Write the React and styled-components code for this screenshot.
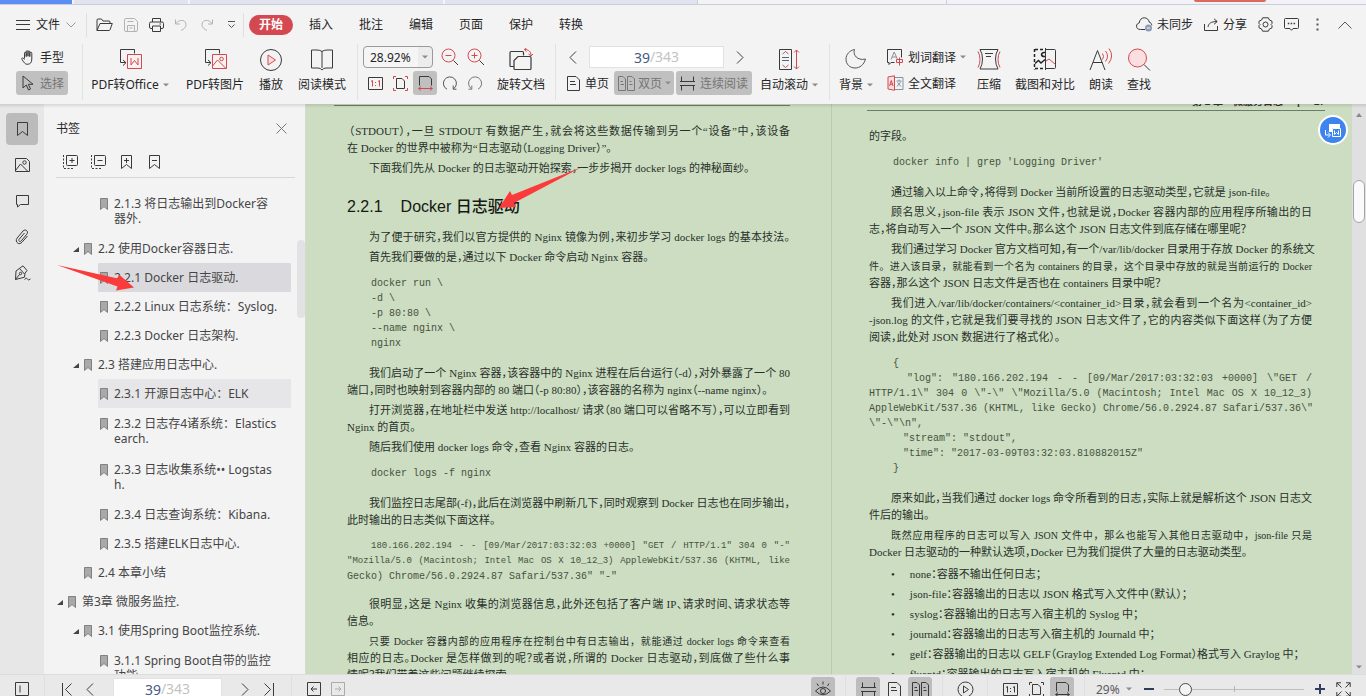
import React from "react";
import styled, { createGlobalStyle } from "styled-components";

const UI = '"Noto Sans", "Noto Sans CJK SC", sans-serif';
const INK = "#3a3a3a";
const RED = "#d4494f";
const BLUE = "#465a82";

const Global = createGlobalStyle`
  * { box-sizing: border-box; }
  body { margin: 0; overflow: hidden; font-family: ${UI}; font-size: 12px; color: #262626; }
  button, input, select { font-family: inherit; font-size: inherit; color: inherit; margin: 0; padding: 0; border: 0; background: none; }
  h1, h2, p, ul { margin: 0; padding: 0; font-size: inherit; font-weight: inherit; }
  svg { display: block; flex: none; }
`;

const Shell = styled.div`
  display: flex;
  flex-direction: column;
  height: 100vh;
  overflow: hidden;
  background: #f3f3f4;
`;

/* ---------- window tabs ---------- */
const TabStrip = styled.div`
  display: flex;
  flex: none;
  height: 5px;
  background: #f2f2f6;
  border-bottom: 1px solid #c9cde0;
`;
const WinTab = styled.span`
  flex: none;
  width: ${(p) => p.$w}px;
  background: ${(p) => p.$bg};
  border-right: ${(p) => p.$edge || 0}px solid ${(p) => p.$line || "#f4f5fa"};
`;
const LoginPill = styled.span`
  flex: none;
  width: 72px;
  height: 2px;
  margin: 0 100px 0 auto;
  background: #dc6a5c;
  border-radius: 0 0 8px 8px;
`;

/* ---------- menu bar ---------- */
const MenuBar = styled.header`
  display: flex;
  flex: none;
  align-items: center;
  height: 38px;
  padding: 1px 14px 0 16px;
`;
const MenuGroup = styled.div`
  display: flex;
  align-items: center;
  gap: ${(p) => p.$gap || 0}px;
  margin-left: ${(p) => (p.$push ? "auto" : `${p.$ml || 0}px`)};
`;
const PlainButton = styled.button`
  display: flex;
  flex: none;
  align-items: center;
  justify-content: center;
  gap: ${(p) => p.$gap || 5}px;
  min-width: ${(p) => p.$w || 0}px;
  height: 20px;
  line-height: 20px;
  white-space: nowrap;
`;
const Divider = styled.span`
  flex: none;
  width: 1px;
  height: ${(p) => p.$h || 24}px;
  margin: 0 ${(p) => p.$mr || 0}px 0 ${(p) => p.$ml || 0}px;
  background: #dfdfe0;
`;
const MenuTab = styled.button`
  flex: none;
  height: 20px;
  padding: 0 ${(p) => (p.$active ? 10 : 0)}px;
  line-height: 20px;
  border-radius: 10px;
  ${(p) => p.$active && `background: ${RED}; color: #fff; font-weight: 700;`}
`;

/* ---------- ribbon ---------- */
const Ribbon = styled.div`
  display: flex;
  flex: none;
  height: 61px;
  padding-left: 16px;
  overflow: hidden;
`;
const RibbonRule = styled.span`
  flex: none;
  width: 1px;
  margin: 1px ${(p) => p.$mr}px 4px ${(p) => p.$ml}px;
  background: #e2e2e3;
`;
const BigButton = styled.button`
  display: flex;
  flex: none;
  flex-direction: column;
  align-items: center;
  width: ${(p) => p.$w}px;
  height: 54px;
  margin-right: ${(p) => p.$mr || 0}px;
  padding-top: 5px;
`;
const BigLabel = styled.span`
  display: flex;
  align-items: center;
  gap: 4px;
  height: 18px;
  margin-top: 4px;
  line-height: 18px;
  white-space: nowrap;
`;
const Stack = styled.div`
  display: flex;
  flex: none;
  flex-direction: column;
  gap: 2px;
  width: ${(p) => p.$w}px;
  margin-right: ${(p) => p.$mr || 0}px;
  padding-top: 2px;
`;
const StackRow = styled.div`
  display: flex;
  align-items: center;
  gap: ${(p) => p.$gap || 0}px;
  height: 24px;
`;
const SmallButton = styled.button`
  display: flex;
  flex: none;
  align-items: center;
  justify-content: ${(p) => (p.$center ? "center" : "flex-start")};
  gap: ${(p) => p.$gap || 4}px;
  width: ${(p) => p.$w}px;
  height: 24px;
  padding-left: ${(p) => p.$pl || 0}px;
  border-radius: 3px;
  white-space: nowrap;
  background: ${(p) => (p.$active ? "#c0c0c0" : "transparent")};
  color: ${(p) => (p.$active ? "#757575" : "inherit")};
`;
const ZoomBox = styled.label`
  display: flex;
  flex: none;
  align-items: center;
  width: 70px;
  height: 22px;
  padding-right: 4px;
  border: 1px solid #9a9a9a;
  border-radius: 4px;
  background: linear-gradient(#ececed, #ececed) right / 14px 100% no-repeat, #f5f5f5;
`;
const ZoomSelect = styled.select`
  flex: 1;
  min-width: 0;
  height: 20px;
  padding-left: 6px;
  appearance: none;
  outline: 0;
`;
const PageBox = styled.label`
  display: flex;
  flex: none;
  align-items: center;
  justify-content: center;
  width: ${(p) => p.$w}px;
  height: 22px;
  border: 1px solid #e2e2e2;
  background: #fff;
  color: #c3c3c3;
  font-size: 14px;
  line-height: 20px;
`;
const PageInput = styled.input`
  width: 16px;
  height: 20px;
  color: ${BLUE};
  outline: 0;
`;

/* ---------- body ---------- */
const Body = styled.main`
  position: relative;
  display: flex;
  flex: 1;
  min-height: 0;
`;
const TopShade = styled.span`
  position: absolute;
  inset: 0 0 auto 0;
  height: 4px;
  background: linear-gradient(rgba(70, 70, 70, 0.16), rgba(70, 70, 70, 0));
  z-index: 2;
`;
const Rail = styled.nav`
  display: flex;
  flex: none;
  flex-direction: column;
  gap: 4px;
  width: 44px;
  padding: 9px 6px;
  background: #e7e7e8;
`;
const RailButton = styled.button`
  display: flex;
  align-items: center;
  justify-content: center;
  width: 32px;
  height: 32px;
  border-radius: 4px;
  background: ${(p) => (p.$active ? "#bbbbbb" : "transparent")};
`;
const Panel = styled.aside`
  display: flex;
  flex: none;
  flex-direction: column;
  width: 262px;
  border-right: 1px solid #d5d9d3;
`;
const PanelHead = styled.div`
  display: flex;
  align-items: center;
  justify-content: space-between;
  height: 46px;
  padding: 2px 18px 0 12px;
`;
const PanelTools = styled.div`
  display: flex;
  align-items: center;
  gap: 12px;
  height: 28px;
  margin: 0 10px 0 12px;
  padding: 0 6px 4px;
  border-bottom: 1px solid #d6d6d7;
`;
const TreeWrap = styled.div`
  display: flex;
  flex: 1;
  min-height: 0;
  overflow: hidden;
`;
const Tree = styled.ul`
  flex: 1;
  padding: 10px 6px 0 10px;
  list-style: none;
`;
const Node = styled.li`
  display: flex;
  gap: 4px;
  margin-left: ${(p) => p.$level * 16}px;
`;
const Twist = styled.span`
  flex: none;
  width: 8px;
  padding: 13px 0 0 3px;
`;
const NodeLink = styled.a`
  display: flex;
  flex: 1;
  gap: 6px;
  padding: ${(p) => (p.$tall ? 8 : 7)}px 0 ${(p) => (p.$tall ? 8 : 7)}px 2px;
  border-radius: 1px;
  background: ${(p) => p.$bg || "transparent"};
  color: #454545;
  line-height: 15px;
  text-decoration: none;
  white-space: nowrap;
`;
const NodeMark = styled.span`
  flex: none;
  padding-top: 2px;
`;
const PanelTrack = styled.span`
  flex: none;
  width: 8px;
  padding-top: 62px;
`;
const PanelThumb = styled.span`
  display: block;
  width: 8px;
  height: 78px;
  border-radius: 4px;
  background: #e2e2e4;
`;

/* ---------- document ---------- */
const Doc = styled.section`
  display: grid;
  grid-template-columns: 525fr 521fr;
  flex: 1;
  min-width: 0;
  overflow: hidden;
  background: #ccddc1;
  color: #28302a;
  font-family: "Liberation Serif", "Noto Sans CJK SC", serif;
  font-size: 11px;
  font-feature-settings: "halt";
`;
const Page = styled.article`
  min-width: 0;
  padding: 0 ${(p) => p.$pr}px 0 ${(p) => p.$pl}px;
  border-left: ${(p) => (p.$edge ? 1 : 0)}px solid #b9cbb0;
`;
const HeadRule = styled.div`
  height: 2px;
  margin: 0 0 17px -13px;
  border-bottom: 1px solid #6c7c66;
`;
const RunningHead = styled.div`
  display: flex;
  justify-content: flex-end;
  gap: 14px;
  height: 15px;
  margin: -8px -13px 17px -2px;
  border-bottom: 1px solid #6c7c66;
  font-family: "Liberation Sans", "Noto Sans CJK SC", sans-serif;
  font-size: 10px;
  font-weight: 700;
  line-height: 12px;
  white-space: nowrap;
`;
const Para = styled.p`
  margin-bottom: 3px;
  line-height: 17px;
`;
const Line = styled.span`
  display: block;
  padding-left: ${(p) => p.$in || 0}px;
  font-size: ${(p) => (p.$size ? `${p.$size}px` : "inherit")};
  font-feature-settings: ${(p) => (p.$size ? "normal" : "inherit")};
  text-align: left;
  text-align-last: ${(p) => (p.$full ? "justify" : "left")};
  white-space: nowrap;
`;
const Title = styled.h2`
  display: flex;
  gap: 18px;
  margin: 19px 0 11px;
  color: #141914;
  font-family: "Liberation Sans", "Noto Sans CJK SC", sans-serif;
  font-size: 16px;
  font-weight: 500;
  line-height: 22px;
`;
const Code = styled.div`
  margin: 10px 0 ${(p) => p.$after || 14}px;
  color: #46523f;
  font-family: "Liberation Mono", monospace;
  font-size: 10px;
  line-height: 15px;
`;
const Bullets = styled.ul`
  padding-top: 2px;
  list-style: none;
`;
const Bullet = styled.li`
  display: flex;
  gap: 15px;
  height: 17px;
  margin: 0 0 3px 22px;
  line-height: 17px;
  white-space: nowrap;
`;
const ScrollTrack = styled.div`
  display: flex;
  flex: none;
  flex-direction: column;
  align-items: center;
  justify-content: space-between;
  width: 14px;
  padding: 9px 0 5px;
  background: #e0e0e1;
`;
const ScrollThumb = styled.span`
  width: 12px;
  height: 43px;
  margin: 63px 0 auto;
  border: 1px solid #a5a5a8;
  border-radius: 6px;
  background: #fafafa;
`;
const ConvertBadge = styled.button`
  position: absolute;
  top: 11px;
  right: 18px;
  display: flex;
  align-items: center;
  justify-content: center;
  width: 30px;
  height: 30px;
  border: 2px solid #fff;
  border-radius: 50%;
  background: #3d84ee;
`;
const Pointer = styled.svg`
  position: absolute;
  top: ${(p) => p.$y}px;
  left: ${(p) => p.$x}px;
`;

/* ---------- status bar ---------- */
const StatusBar = styled.footer`
  display: flex;
  flex: none;
  align-items: flex-start;
  height: 22px;
  padding: 1px 15px 0 15px;
  overflow: hidden;
  border-top: 1px solid #dcdcdd;
  background: #e9e9ea;
`;
const StatusGroup = styled.div`
  display: flex;
  flex: none;
  align-items: center;
  height: 26px;
  margin-left: ${(p) => (p.$push ? "auto" : `${p.$ml || 0}px`)};
`;
const StatusButton = styled.button`
  display: flex;
  flex: none;
  align-items: center;
  justify-content: center;
  width: ${(p) => p.$w || 24}px;
  height: 24px;
  border-radius: 3px;
  background: ${(p) => (p.$active ? "#bdbdbd" : "transparent")};
`;
const StatusZoom = styled.label`
  display: flex;
  align-items: center;
  width: 36px;
`;
const StatusSelect = styled.select`
  width: 30px;
  height: 20px;
  appearance: none;
  outline: 0;
  color: #5c5c5c;
`;
const Slider = styled.input.attrs({ type: "range" })`
  width: 140px;
  height: 14px;
  appearance: none;
  outline: 0;
  background:
    linear-gradient(#b4b4b6, #b4b4b6) 50% 50% / 1px 6px no-repeat,
    linear-gradient(#bdbdbf, #bdbdbf) 0 50% / 100% 1px no-repeat;
  &::-webkit-slider-thumb {
    appearance: none;
    width: 13px;
    height: 13px;
    border: 1px solid #4a4a4a;
    border-radius: 50%;
    background: #f4f4f4;
  }
`;

/* ---------- icons ---------- */
const Svg = ({ w, h = w, c = INK, sw = 1, children }) => (
  <svg width={w} height={h} viewBox={`0 0 ${w} ${h}`} fill="none" stroke={c} strokeWidth={sw} aria-hidden="true">
    {children}
  </svg>
);
const Caret = ({ c = "#8c8c8c" }) => (
  <Svg w={6} h={4}><path d="M0 0.500h6L3 3.500z" fill={c} stroke="none" /></Svg>
);
const Menu = () => <Svg w={14} h={10}><path d="M0 .500h14M0 4.500h14M0 9.500h14" /></Svg>;
const Chevron = ({ w = 10, h = 6, d, c = "#999" }) => <Svg w={w} h={h} c={c}><path d={d || "M.500.500 5 5 9.500.500"} /></Svg>;
const Folder = () => (
  <Svg w={17} h={14}><path d="M1 12.500V2q0-1 1-1h3.500l1.500 2H13q1 0 1 1v1.500M1 12.500 4 5.500h12.300L14 11.800q-.3.700-1 .7z" /></Svg>
);
const Save = () => (
  <Svg w={14} c="#b3b3b3"><path d="M.5 2V12q0 1.500 1.500 1.500h10q1.500 0 1.500-1.500V3.500l-3-3H2Q.5.5.5 2zM3.500 13V7.500h7V13M3.500 3.500h6M5.500 10h3" /></Svg>
);
const Printer = () => (
  <Svg w={15} h={14}><path d="M3.500 4V.5h8V4M3.500 10.500H2q-1.500 0-1.500-1.500V5.500Q.5 4 2 4h11q1.500 0 1.500 1.500V9q0 1.500-1.500 1.500h-1.500M3.500 8h8v5.500h-8zM10.500 6h1.500" /></Svg>
);
const Undo = () => <Svg w={12} h={13} c="#b3b3b3"><path d="M.5 1.500V6h4.500M1 5.500C4 1 11 1.500 11 6.500c0 3-2 4.500-5 6" /></Svg>;
const Redo = () => <Svg w={12} h={13} c="#b3b3b3"><path d="M11.500 1.500V6H7M11 5.500C8 1 1 1.500 1 6.500c0 3 2 4.500 5 6" /></Svg>;
const Customize = () => <Svg w={9} h={8} c="#555"><path d="M1 .5h7M1.500 3.500 4.500 6.500l3-3" /></Svg>;
const Cloud = () => (
  <Svg w={17} h={15}>
    <path d="M9 12.500H4.500C1.500 12.500.5 10.800.5 9.200c0-1.700 1.100-2.900 2.700-3.200C3.600 2.800 5.500.8 8.300.8c2.600 0 4.600 1.900 4.900 4.300 1.600.4 2.500 1.700 2.500 3.200" />
    <circle cx="12.500" cy="11" r="3.500" fill="#8e9bb3" stroke="none" /><path d="M10.800 11h3.400" stroke="#fff" />
  </Svg>
);
const Share = () => <Svg w={15} h={13}><path d="M.5 6v6.500h13V8M4 9C4.500 5.500 7 3.500 13 3.500M10 .8l3.200 2.700L10 6.300" /></Svg>;
const Gear = () => (
  <Svg w={15}><path d="M4.600.8h5.800l1 2.200 2.600 1.200v2.300l-1 1 1 1v2.300L11.400 12l-1 2.200H4.600L3.600 12 1 10.800V8.500l1-1-1-1V4.200L3.600 3z" /><circle cx="7.500" cy="7.500" r="2.500" /></Svg>
);
const Chat = () => (
  <Svg w={15} h={13}><path d="M1.500.5h12q1 0 1 1v8q0 1-1 1H9L7.500 12.300 6 10.500H1.500q-1 0-1-1v-8q0-1 1-1z" /><path d="M3.800 5.500h1.500m1.400 0h1.500m1.400 0h1.500" strokeWidth="1.500" /></Svg>
);
const Dots = () => <Svg w={3} h={13}><path d="M.5.500h2v2h-2zM.5 5.500h2v2h-2zM.5 10.500h2v2h-2z" fill="#555" stroke="none" /></Svg>;
const Hand = () => (
  <Svg w={14} h={15}><path d="M3.500 8.500V3.200q0-1 .8-1t.9 1V7M5.200 6V1.700q0-1 .9-1t.9 1V6.500M7 6V2q0-1 .9-1t.9 1v4.700M8.800 6.500V3.200q0-1 1-1t1 1V9c0 3.500-1.500 5.300-4.500 5.300C4 14.300 3 12.500 1 9.500.3 8.300 1.500 7.300 2.500 8.300l1 1.200" /></Svg>
);
const Cursor = () => <Svg w={13} h={16}><path d="M1 1v12l3.300-3 2.200 5 2-1-2.200-4.700H11z" /></Svg>;
const ToOffice = () => (
  <Svg w={24}>
    <path d="M16.500 5.500V1.500h-14V14.500h5M5 12l3 2.700L5 17.500" />
    <path d="M9.500 6.500h14v14h-14z" stroke={RED} fill="#faf1f1" /><path d="M13 10v7l3.500-4.500L20 17v-7" stroke={RED} />
  </Svg>
);
const ToImage = () => (
  <Svg w={24}>
    <path d="M16.500 5.500V1.500h-14V14.500h5M5 12l3 2.700L5 17.500" />
    <path d="M9.500 6.500h14v14h-14z" stroke={RED} fill="#faf1f1" /><path d="m9.500 18 5-6 8.500 8.500" stroke={RED} /><circle cx="18.500" cy="11" r="1.800" stroke={RED} />
  </Svg>
);
const PlayBig = () => (
  <Svg w={24}><circle cx="12" cy="12" r="10.500" /><path d="M9 7v10l7.500-5z" stroke={RED} fill="#fbdfe0" /></Svg>
);
const Book = () => <Svg w={24}><path d="M12 3.500Q10 2 7 2H1.500v18H8q2.500 0 4 2 1.500-2 4-2h6.500V2H17q-3 0-5 1.500zV20" /></Svg>;
const ZoomGlass = ({ plus }) => (
  <Svg w={18}><circle cx="7.500" cy="7.500" r="6.500" stroke={RED} /><path d="m12.500 12.500 4.500 4.500" /><path d={plus ? "M4.500 7.500h6M7.500 4.500v6" : "M4.500 7.500h6"} stroke={RED} /></Svg>
);
const OneToOne = ({ c = INK, r = RED, h = 13 }) => (
  <Svg w={15} h={h} c={c}><path d={`M.5.5h14v${h - 1}H.5z`} /><path d="M3 4.500 4.500 3.500v6M10 4.500l1.500-1v6M7.500 5v1M7.500 8v1" stroke={r} /></Svg>
);
const FitPage = ({ r = RED }) => (
  <Svg w={15}><path d="M3.500 2.500h5.500l2.500 2.500v7.500h-8z" /><path d="M.5 3V.5H3M12 .5h2.500V3M14.500 12v2.500H12M3 14.500H.5V12" stroke={r} /></Svg>
);
const FitWidth = ({ r = RED }) => (
  <Svg w={15}><path d="M1.500 9.500v-9h9.500l2.500 2.500v6.500" /><path d="M.5 12.500h14M3 10.500l-2.300 2L3 14.500M12 10.500l2.300 2-2.300 2" stroke={r} /></Svg>
);
const Rotate = ({ flip }) => (
  <Svg w={16} h={15} c={flip ? "#777" : "#555"}>
    {flip ? <path d="M11 13.200A6.500 6.500 0 1 0 4.500 12.800M4.800 9.500v3.700H1.500" /> : <path d="M5 13.200A6.500 6.500 0 1 1 11.500 12.800M11.200 9.500v3.700h3.300" />}
  </Svg>
);
const RotateDoc = () => (
  <Svg w={24} sw={1.2}>
    <path d="M5.500 18.500H2q-1 0-1-1v-13q0-1 1-1h11.500q1 0 1 1v3" /><path d="M9 8.500h12q1 0 1 1v11q0 1-1 1H6q-1 0-1-1v-8z" fill="#f3f3f4" />
    <path d="M15.500 1.500c4 0 6.500 2 6.500 6M17.500 0l-2.200 1.500 2.200 2M19.500 6l2.500 2L24 6" stroke={RED} strokeWidth="1" />
  </Svg>
);
const Single = () => <Svg w={13} h={15}><path d="M.5.500h8.500l3.500 3.500v10.500H.5zM3 5.500h5M3 8.500h6" /></Svg>;
const Double = ({ c = "#777" }) => <Svg w={17} h={15} c={c}><path d="M.5.500h4.500l2.500 2.500V14.500H.5zM9.500.500h4.500l2.500 2.500V14.500H9.500zM2.500 5.500h2.500M2.500 8.500h3.500M11.500 5.500h2M11.500 8.500h3" /></Svg>;
const Continuous = () => <Svg w={15}><path d="M1.500.5v5h12v-5M1.500 14.500v-5h12v5M0 5.500h15M0 9.500h15" /></Svg>;
const AutoScroll = () => (
  <Svg w={24}><path d="M2.500 1.500h12v20h-12z" /><path d="m5.500 6 3-2.500L11.500 6M5.500 17l3 2.500 3-2.500" stroke="#b05a63" /><path d="M5 9.500h7M5 12.500h7" stroke="#52677a" /><path d="M19.500 2v19M17 4.500 19.500 2 22 4.500M17 18.500l2.500 2.500 2.500-2.500" stroke={RED} /></Svg>
);
const Moon = () => <Svg w={24} c="#555"><path d="M10.500 1.500c-2 5.500 3 11.500 11 9.500-1.500 6-6 9-10.500 9C5.500 20 2 16 2 11.200 2 6.500 5.500 2.500 10.500 1.500z" /></Svg>;
const PickWord = () => (
  <Svg w={17}><path d="M7.500 13.500H4L2 15.500v-2H.5V.5h14v8" /><path d="M4 10.500 7.200 3l3.300 7.500M5 8h4.500" stroke="#8a8f98" /><path d="M9.500 10.500h6v3h-6zM12.500 8.500v8" stroke={RED} /></Svg>
);
const FullText = () => (
  <Svg w={17} h={16}><path d="M8 2.500h8v12H8M9.500 6h5M12 4.500V6M10 11.500l4-5M10.500 7.500l3.500 4" stroke="#8293a5" /><path d="M1 2 7.500.8v14.500L1 14z" stroke={RED} fill="#fbdfe0" /><path d="m2.500 11 1.800-5.500L6 11M3 9.200h2.600" stroke={RED} /></Svg>
);
const Compress = () => (
  <Svg w={24}><path d="M3 1.500h18q-2.500 4-2.500 9.500t2.500 10H3q2.500-4.500 2.500-10T3 1.500zM8 5.500h8M9 8.500h5" /><path d="M1 3.500q2 3.500 2 8t-2 8M23 3.500q-2 3.500-2 8t2 8" stroke={RED} /></Svg>
);
const Snip = () => (
  <Svg w={24}>
    <path d="M1.500 1v20.500" strokeDasharray="3 2" stroke="#222" strokeWidth="1.500" /><path d="M2 1.500h10M2 20.500h10" strokeDasharray="3 2" stroke="#222" strokeWidth="1.500" />
    <path d="M12.500 0v22M13 1.500h8.500q1 0 1 1v17q0 1-1 1H13" />
    <path d="m2 15.500 3.500-3L8 15l4-3.500" stroke="#222" strokeWidth="1.500" /><path d="m13 13 3-2 6.500 5.500" stroke={RED} />
    <path d="M12 4.500Q9 4 8.500 6.500 9 9 12 8.500" stroke="#222" strokeWidth="1.500" />
  </Svg>
);
const ReadAloud = () => (
  <Svg w={24}><path d="M1 22 8.500 2.500 16 22M4 14.500h9.500" /><path d="M13.500 5.500q2 3 0 6M16.500 3q4 5 0 10.500M20 .5q5.500 7.500-.5 15" stroke={RED} /></Svg>
);
const Find = () => <Svg w={24}><circle cx="10.500" cy="10" r="9" stroke={RED} fill="#fbdfe0" /><path d="m17 16.500 6 6" /></Svg>;
const Mark = ({ kind }) => (
  <Svg w={13} h={16}><path d="M1.500 1.500h10v13l-5-4-5 4z" />{kind && <path d={kind === "plus" ? "M4 6.500h5M6.500 4v5" : "M4 6.500h5"} />}</Svg>
);
const MarkFill = () => <Svg w={8} h={12} c="#808080"><path d="M.5.5h7v11L4 8.500.5 11.500z" fill="#a9a9a9" /></Svg>;
const Boxes = ({ plus }) => (
  <Svg w={16}>
    <path d="M4.500 1.500h10q1 0 1 1v8q0 1-1 1h-9q-1 0-1-1z" /><path d={plus ? "M7.500 6.500h5M10 4v5" : "M7.500 6.500h5"} />
    <path d="M1.500 1v13.500H12" strokeDasharray="2 1.500" />
  </Svg>
);
const Picture = () => <Svg w={15} h={16}><path d="M.5 1.500h11l3 3v10H.5z" /><path d="m.5 13.500 5-6.500 7.500 7.500" /><circle cx="9.500" cy="5.500" r="1.700" /></Svg>;
const Bubble = () => <Svg w={15} h={14}><path d="M1.500 1.500h12v9h-8l-3 2.500v-2.500h-1z" /></Svg>;
const Clip = () => <Svg w={14} h={16}><path d="M9.500 4 4.200 10.200c-1.300 1.600.7 3.200 2 1.700L11.800 5.200C14 2.300 10.400-.5 8 2L2.200 9C-.8 12.700 4 16.800 7 13.200L12.500 7" /></Svg>;
const Pen = () => <Svg w={17} h={16}><path d="m6 3 3-2.200 4 4.700-2 2.700-.5 4L1.500 14.500 2 6zM5.500 3.500l5 5.500M1.500 14.500l4-5M10.500 14.500q2-2.500 3-.5t3 0" /><circle cx="6.500" cy="8.500" r="1.200" /></Svg>;
const Close = () => <Svg w={11} c="#777"><path d="m.5.500 10 10M10.500.5l-10 10" /></Svg>;
const Play = () => <Svg w={17}><circle cx="8.500" cy="8.500" r="7.500" /><path d="M6.500 5v7l5-3.500z" /></Svg>;
const Eye = () => <Svg w={18}><path d="M1.500 11Q9 3 16.500 11 9 18.500 1.500 11zM3 3.500l1.500 2.500M9 1.500v3M15 3.500 13.500 6" /><circle cx="9" cy="11" r="2.500" /></Svg>;
const Arrowed = ({ right, c = INK }) => (
  <Svg w={14} c={c}><path d="M.5.5h13v13H.5z" /><path d={right ? "M4 7h6M7.500 4.500 10 7 7.500 9.500" : "M4 7h6M6.500 4.500 4 7l2.500 2.500"} /></Svg>
);
const Expand = () => <Svg w={15}><path d="M5 .8H.8V5M.8.8 5.500 5.500M10 .8h4.200V5M14.200.8 9.500 5.500M5 14.200H.8V10M.8 14.200l4.700-4.700M10 14.200h4.200V10M14.200 14.200 9.500 9.500" /></Svg>;

/* ---------- content ---------- */
const TREE = [
  { level: 2, text: ["2.1.3 将日志输出到Docker容", "器外."] },
  { level: 1, open: true, text: ["2.2 使用Docker容器日志."] },
  { level: 2, text: ["2.2.1 Docker 日志驱动."], bg: "#dadade" },
  { level: 2, text: ["2.2.2 Linux 日志系统：Syslog."] },
  { level: 2, text: ["2.2.3 Docker 日志架构."] },
  { level: 1, open: true, text: ["2.3 搭建应用日志中心."] },
  { level: 2, text: ["2.3.1 开源日志中心：ELK"], bg: "#e6e6e8" },
  { level: 2, text: ["2.3.2 日志存4诸系统：Elastics", "earch."] },
  { level: 2, text: ["2.3.3 日志收集系统•• Logstas", "h."] },
  { level: 2, text: ["2.3.4 日志查询系统：Kibana."] },
  { level: 2, text: ["2.3.5 搭建ELK日志中心."] },
  { level: 1, text: ["2.4 本章小结"] },
  { level: 0, open: true, text: ["第3章 微服务监控."] },
  { level: 1, open: true, text: ["3.1 使用Spring Boot监控系统."] },
  { level: 2, text: ["3.1.1 Spring Boot自带的监控", "功能."] },
];

const BULLETS = [
  "none：容器不输出任何日志；",
  "json-file：容器输出的日志以 JSON 格式写入文件中（默认）；",
  "syslog：容器输出的日志写入宿主机的 Syslog 中；",
  "journald：容器输出的日志写入宿主机的 Journald 中；",
  "gelf：容器输出的日志以 GELF（Graylog Extended Log Format）格式写入 Graylog 中；",
  "fluentd：容器输出的日志写入宿主机的 Fluentd 中；",
];

const Big = ({ icon, label, w, mr, caret }) => (
  <BigButton $w={w} $mr={mr}>
    {icon}
    <BigLabel>{label}{caret && <Caret />}</BigLabel>
  </BigButton>
);

function LeftPage() {
  return (
    <Page $pl={41} $pr={41}>
      <HeadRule />
      <Para>
        <Line $full $in={2}>（STDOUT），一旦 STDOUT 有数据产生，就会将这些数据传输到另一个“设备”中，该设备</Line>
        <Line>在 Docker 的世界中被称为“日志驱动（Logging Driver）”。</Line>
      </Para>
      <Para><Line $in={22}>下面我们先从 Docker 的日志驱动开始探索，一步步揭开 docker logs 的神秘面纱。</Line></Para>
      <Title><span>2.2.1</span><span>Docker 日志驱动</span></Title>
      <Para><Line $full $in={22}>为了便于研究，我们以官方提供的 Nginx 镜像为例，来初步学习 docker logs 的基本技法。</Line></Para>
      <Para><Line $in={22}>首先我们要做的是，通过以下 Docker 命令启动 Nginx 容器。</Line></Para>
      <Code>
        <Line $in={24}>docker run \</Line>
        <Line $in={24}>-d \</Line>
        <Line $in={24}>-p 80:80 \</Line>
        <Line $in={24}>--name nginx \</Line>
        <Line $in={24}>nginx</Line>
      </Code>
      <Para>
        <Line $full $in={22}>我们启动了一个 Nginx 容器，该容器中的 Nginx 进程在后台运行（-d），对外暴露了一个 80</Line>
        <Line>端口，同时也映射到容器内部的 80 端口（-p 80:80），该容器的名称为 nginx（--name nginx）。</Line>
      </Para>
      <Para>
        <Line $full $in={22}>打开浏览器，在地址栏中发送 http://localhost/ 请求（80 端口可以省略不写），可以立即看到</Line>
        <Line>Nginx 的首页。</Line>
      </Para>
      <Para><Line $in={22}>随后我们使用 docker logs 命令，查看 Nginx 容器的日志。</Line></Para>
      <Code><Line $in={24}>docker logs -f nginx</Line></Code>
      <Para>
        <Line $full $in={22}>我们监控日志尾部(-f)，此后在浏览器中刷新几下，同时观察到 Docker 日志也在同步输出，</Line>
        <Line>此时输出的日志类似下面这样。</Line>
      </Para>
      <Code $after={12}>
        <Line $full $in={24} $size={9}>180.166.202.194 - - [09/Mar/2017:03:32:03 +0000] "GET / HTTP/1.1" 304 0 "-"</Line>
        <Line $full $size={9}>"Mozilla/5.0 (Macintosh; Intel Mac OS X 10_12_3) AppleWebKit/537.36 (KHTML, like</Line>
        <Line>Gecko) Chrome/56.0.2924.87 Safari/537.36" "-"</Line>
      </Code>
      <Para>
        <Line $full $in={22}>很明显，这是 Nginx 收集的浏览器信息，此外还包括了客户端 IP、请求时间、请求状态等</Line>
        <Line>信息。</Line>
      </Para>
      <Para>
        <Line $full $in={22} $size={10}>只要 Docker 容器内部的应用程序在控制台中有日志输出，就能通过 docker logs 命令来查看</Line>
        <Line $full>相应的日志。Docker 是怎样做到的呢？或者说，所谓的 Docker 日志驱动，到底做了些什么事</Line>
        <Line>情呢？我们带着这些问题继续探索。</Line>
      </Para>
    </Page>
  );
}

function RightPage() {
  return (
    <Page $pl={37} $pr={40} $edge>
      <RunningHead><span>第 2 章　微服务日志</span><span>|</span><span>27</span></RunningHead>
      <Para><Line>的字段。</Line></Para>
      <Code><Line $in={24}>docker info | grep 'Logging Driver'</Line></Code>
      <Para><Line $in={22}>通过输入以上命令，将得到 Docker 当前所设置的日志驱动类型，它就是 json-file。</Line></Para>
      <Para>
        <Line $full $in={22}>顾名思义，json-file 表示 JSON 文件，也就是说，Docker 容器内部的应用程序所输出的日</Line>
        <Line>志，将自动写入一个 JSON 文件中。那么这个 JSON 日志文件到底存储在哪里呢？</Line>
      </Para>
      <Para>
        <Line $full $in={22}>我们通过学习 Docker 官方文档可知，有一个/var/lib/docker 目录用于存放 Docker 的系统文</Line>
        <Line $full $size={10}>件。进入该目录，就能看到一个名为 containers 的目录，这个目录中存放的就是当前运行的 Docker</Line>
        <Line>容器，那么这个 JSON 日志文件是否也在 containers 目录中呢？</Line>
      </Para>
      <Para>
        <Line $full $in={22}>我们进入/var/lib/docker/containers/&lt;container_id&gt;目录，就会看到一个名为&lt;container_id&gt;</Line>
        <Line $full>-json.log 的文件，它就是我们要寻找的 JSON 日志文件了，它的内容类似下面这样（为了方便</Line>
        <Line>阅读，此处对 JSON 数据进行了格式化）。</Line>
      </Para>
      <Code>
        <Line $in={24}>{"{"}</Line>
        <Line $full $in={38}>"log": "180.166.202.194 - - [09/Mar/2017:03:32:03 +0000] \"GET /</Line>
        <Line $full>HTTP/1.1\" 304 0 \"-\" \"Mozilla/5.0 (Macintosh; Intel Mac OS X 10_12_3)</Line>
        <Line $full>AppleWebKit/537.36 (KHTML, like Gecko) Chrome/56.0.2924.87 Safari/537.36\"</Line>
        <Line>\"-\"\n",</Line>
        <Line $in={34}>"stream": "stdout",</Line>
        <Line $in={34}>"time": "2017-03-09T03:32:03.810882015Z"</Line>
        <Line $in={24}>{"}"}</Line>
      </Code>
      <Para>
        <Line $full $in={22}>原来如此，当我们通过 docker logs 命令所看到的日志，实际上就是解析这个 JSON 日志文</Line>
        <Line>件后的输出。</Line>
      </Para>
      <Para>
        <Line $full $in={22} $size={10}>既然应用程序的日志可以写入 JSON 文件中，那么也能写入其他日志驱动中，json-file 只是</Line>
        <Line>Docker 日志驱动的一种默认选项，Docker 已为我们提供了大量的日志驱动类型。</Line>
      </Para>
      <Bullets>
        {BULLETS.map((b) => <Bullet key={b}><span>•</span><span>{b}</span></Bullet>)}
      </Bullets>
    </Page>
  );
}

export default function App() {
  return (
    <Shell>
      <Global />
      <TabStrip>
        <WinTab $w={74} $bg="#5b8df2" $edge={2} />
        <WinTab $w={116} $bg="#e1e4ef" $edge={2} />
        <WinTab $w={255} $bg="#e1e4ef" $edge={2} />
        <WinTab $w={253} $bg="#e1e4ef" $edge={1} $line="#c9cde0" />
        <WinTab $w={249} $bg="#f3f3f4" $edge={1} $line="#c9cde0" />
        <LoginPill />
      </TabStrip>

      <MenuBar>
        <PlainButton $gap={6}><Menu /><span>文件</span><Chevron /></PlainButton>
        <Divider $ml={10} $mr={9} />
        <MenuGroup $gap={11}>
          <PlainButton aria-label="打开"><Folder /></PlainButton>
          <PlainButton aria-label="保存"><Save /></PlainButton>
          <PlainButton aria-label="打印"><Printer /></PlainButton>
          <PlainButton aria-label="撤销"><Undo /></PlainButton>
          <MenuGroup $ml={3}><PlainButton aria-label="恢复"><Redo /></PlainButton></MenuGroup>
          <MenuGroup $ml={3}><PlainButton aria-label="自定义"><Customize /></PlainButton></MenuGroup>
        </MenuGroup>
        <Divider $ml={7} $mr={5} />
        <MenuTab $active>开始</MenuTab>
        <MenuGroup $ml={16} $gap={26}>
          {["插入", "批注", "编辑", "页面", "保护", "转换"].map((t) => <MenuTab key={t}>{t}</MenuTab>)}
        </MenuGroup>
        <MenuGroup $push $gap={11}>
          <PlainButton $gap={4}><Cloud /><span>未同步</span></PlainButton>
          <PlainButton $gap={4}><Share /><span>分享</span></PlainButton>
          <PlainButton aria-label="设置"><Gear /></PlainButton>
          <PlainButton aria-label="反馈"><Chat /></PlainButton>
        </MenuGroup>
        <MenuGroup $ml={17} $gap={19}>
          <PlainButton aria-label="更多"><Dots /></PlainButton>
          <PlainButton aria-label="收起"><Chevron w={14} h={8} d="M.5 7.500 7 1l6.500 6.500" c="#555" /></PlainButton>
        </MenuGroup>
      </MenuBar>

      <Ribbon>
        <Stack $w={52}>
          <StackRow><SmallButton $w={52} $pl={5} $gap={5}><Hand />手型</SmallButton></StackRow>
          <StackRow><SmallButton $w={52} $pl={6} $gap={5} $active><Cursor />选择</SmallButton></StackRow>
        </Stack>
        <RibbonRule $ml={14} $mr={2} />
        <Big w={90} icon={<ToOffice />} label="PDF转Office" caret />
        <Big w={80} icon={<ToImage />} label="PDF转图片" />
        <Big w={32} icon={<PlayBig />} label="播放" />
        <Big w={70} icon={<Book />} label="阅读模式" />
        <RibbonRule $ml={0} $mr={5} />
        <Stack $w={126} $mr={4}>
          <StackRow $gap={8}>
            <ZoomBox>
              <ZoomSelect aria-label="缩放比例" defaultValue="28.92%"><option>28.92%</option></ZoomSelect>
              <Caret />
            </ZoomBox>
            <SmallButton $w={18} $center aria-label="缩小"><ZoomGlass /></SmallButton>
            <SmallButton $w={18} $center aria-label="放大"><ZoomGlass plus /></SmallButton>
          </StackRow>
          <StackRow $gap={1}>
            <SmallButton $w={24} $center aria-label="实际大小"><OneToOne /></SmallButton>
            <SmallButton $w={24} $center aria-label="适合页面"><FitPage /></SmallButton>
            <SmallButton $w={24} $center $active aria-label="适合宽度"><FitWidth /></SmallButton>
            <SmallButton $w={24} $center aria-label="顺时针旋转"><Rotate /></SmallButton>
            <SmallButton $w={24} $center aria-label="逆时针旋转"><Rotate flip /></SmallButton>
          </StackRow>
        </Stack>
        <Big w={56} icon={<RotateDoc />} label="旋转文档" />
        <RibbonRule $ml={6} $mr={7} />
        <Stack $w={189} $mr={5}>
          <StackRow>
            <SmallButton $w={26} $pl={6} aria-label="上一页"><Chevron w={8} h={13} d="M7 .5 1 6.500l6 6" c={INK} /></SmallButton>
            <PageBox $w={135}><PageInput aria-label="页码" defaultValue="39" /><span>/343</span></PageBox>
            <SmallButton $w={26} $pl={12} aria-label="下一页"><Chevron w={8} h={13} d="m1 .5 6 6-6 6" c={INK} /></SmallButton>
          </StackRow>
          <StackRow $gap={2}>
            <SmallButton $w={49} $pl={4} $gap={5}><Single />单页</SmallButton>
            <SmallButton $w={60} $pl={4} $gap={3} $active><Double />双页<Caret /></SmallButton>
            <SmallButton $w={76} $pl={4} $gap={5} $active><Continuous />连续阅读</SmallButton>
          </StackRow>
        </Stack>
        <Big w={64} icon={<AutoScroll />} label="自动滚动" caret />
        <RibbonRule $ml={8} $mr={6} />
        <Big w={40} mr={11} icon={<Moon />} label="背景" caret />
        <Stack $w={80} $mr={6}>
          <StackRow><SmallButton $w={80}><PickWord />划词翻译<Caret /></SmallButton></StackRow>
          <StackRow><SmallButton $w={80}><FullText />全文翻译</SmallButton></StackRow>
        </Stack>
        <Big w={32} mr={7} icon={<Compress />} label="压缩" />
        <Big w={66} mr={7} icon={<Snip />} label="截图和对比" />
        <Big w={32} mr={6} icon={<ReadAloud />} label="朗读" />
        <Big w={32} icon={<Find />} label="查找" />
      </Ribbon>

      <Body>
        <TopShade />
        <Rail>
          <RailButton $active aria-label="书签"><Mark /></RailButton>
          <RailButton aria-label="缩略图"><Picture /></RailButton>
          <RailButton aria-label="批注"><Bubble /></RailButton>
          <RailButton aria-label="附件"><Clip /></RailButton>
          <RailButton aria-label="签名"><Pen /></RailButton>
        </Rail>
        <Panel>
          <PanelHead><h1>书签</h1><PlainButton aria-label="关闭"><Close /></PlainButton></PanelHead>
          <PanelTools>
            <PlainButton $w={16} aria-label="展开"><Boxes plus /></PlainButton>
            <PlainButton $w={16} aria-label="折叠"><Boxes /></PlainButton>
            <PlainButton $w={16} aria-label="添加书签"><Mark kind="plus" /></PlainButton>
            <PlainButton $w={16} aria-label="删除书签"><Mark kind="minus" /></PlainButton>
          </PanelTools>
          <TreeWrap>
            <Tree>
              {TREE.map((n) => {
                const tall = n.text.length > 1;
                return (
                  <Node key={n.text[0]} $level={n.level}>
                    <Twist>{n.open && <Svg w={6} h={5}><path d="M6 0v5H0z" fill="#444" stroke="none" /></Svg>}</Twist>
                    <NodeLink href="#" $bg={n.bg} $tall={tall}>
                      <NodeMark><MarkFill /></NodeMark>
                      <span>{n.text[0]}{tall && <br />}{n.text[1]}</span>
                    </NodeLink>
                  </Node>
                );
              })}
            </Tree>
            <PanelTrack><PanelThumb /></PanelTrack>
          </TreeWrap>
        </Panel>
        <Doc>
          <LeftPage />
          <RightPage />
        </Doc>
        <ScrollTrack>
          <Svg w={6} h={4}><path d="M0 4h6L3 0z" fill="#888" stroke="none" /></Svg>
          <ScrollThumb />
          <Caret c="#888" />
        </ScrollTrack>
        <ConvertBadge aria-label="转换">
          <Svg w={18}><path d="M5 3h11v4H8v4H5z" fill="#fff" stroke="none" /><path d="M1.500 9v5h4M4 11.500 6.500 14 4 16.500" stroke="#fff" /><path d="M8.500 7.500h8v8h-8z" stroke="#fff" /><path d="M10.500 9.500v4l2-2 2 2v-4" stroke="#fff" /></Svg>
        </ConvertBadge>
        <Pointer $x={56} $y={160} width="80" height="28" viewBox="0 0 80 28" aria-hidden="true">
          <path d="M1 1 62 14.500l1-4L78 23.500 60 26.500l1.500-4z" fill="#fb3b3b" />
        </Pointer>
        <Pointer $x={498} $y={62} width="86" height="44" viewBox="0 0 86 44" aria-hidden="true">
          <path d="M84 1 14 29l-2-4L1 42l17-1-2-4z" fill="#fb3b3b" />
        </Pointer>
      </Body>

      <StatusBar>
        <StatusGroup>
          <StatusButton $w={14} aria-label="侧栏"><Svg w={14}><path d="M.5.5h13v13H.5zM5 3.500v7" /></Svg></StatusButton>
          <Divider $ml={15} $mr={12} $h={26} />
          <StatusButton $w={20} aria-label="首页"><Svg w={12} h={13}><path d="M1.500 0v13M10.500.5l-6 6 6 6" /></Svg></StatusButton>
          <StatusButton $w={26} aria-label="上一页"><Svg w={8} h={13}><path d="M7 .5 1 6.500l6 6" /></Svg></StatusButton>
        </StatusGroup>
        <StatusGroup $ml={10}>
          <PageBox $w={109}><PageInput aria-label="当前页" defaultValue="39" /><span>/343</span></PageBox>
          <MenuGroup $ml={13}><StatusButton $w={20} aria-label="下一页"><Svg w={8} h={13}><path d="m1 .5 6 6-6 6" /></Svg></StatusButton></MenuGroup>
          <MenuGroup $ml={4}><StatusButton $w={20} aria-label="末页"><Svg w={12} h={13}><path d="M10.500 0v13M1.500.5l6 6-6 6" /></Svg></StatusButton></MenuGroup>
          <Divider $ml={12} $mr={15} $h={26} />
          <StatusButton $w={14} aria-label="后退"><Arrowed /></StatusButton>
          <MenuGroup $ml={10}><StatusButton $w={14} aria-label="前进"><Arrowed right c="#ababab" /></StatusButton></MenuGroup>
        </StatusGroup>
        <StatusGroup $push>
          <StatusButton $active aria-label="护眼"><Eye /></StatusButton>
          <Divider $ml={10} $mr={10} $h={26} />
          <StatusButton $active aria-label="连续"><Continuous /></StatusButton>
          <StatusButton $w={28} aria-label="单页"><Single /></StatusButton>
          <StatusButton $active aria-label="双页"><Double c={INK} /></StatusButton>
          <Divider $ml={10} $mr={10} $h={26} />
          <StatusButton aria-label="播放"><Play /></StatusButton>
          <Divider $ml={10} $mr={10} $h={26} />
          <StatusButton aria-label="实际大小"><OneToOne r={INK} /></StatusButton>
          <StatusButton $w={28} aria-label="适合页面"><FitPage r={INK} /></StatusButton>
          <StatusButton $active aria-label="适合宽度"><FitWidth r={INK} /></StatusButton>
          <Divider $ml={10} $mr={11} $h={26} />
          <StatusZoom><StatusSelect aria-label="缩放" defaultValue="29%"><option>29%</option></StatusSelect><Caret /></StatusZoom>
          <MenuGroup $ml={12} $gap={10}>
            <StatusButton $w={10} aria-label="缩小"><Svg w={10} c="#2e3d5c" sw={2}><path d="M0 5h10" /></Svg></StatusButton>
            <Slider aria-label="缩放滑块" min="0" max="100" defaultValue="12" />
            <StatusButton $w={12} aria-label="放大"><Svg w={12} c="#2e3d5c" sw={2}><path d="M1 6h10M6 1v10" /></Svg></StatusButton>
            <StatusButton $w={15} aria-label="全屏"><Expand /></StatusButton>
          </MenuGroup>
        </StatusGroup>
      </StatusBar>
    </Shell>
  );
}
